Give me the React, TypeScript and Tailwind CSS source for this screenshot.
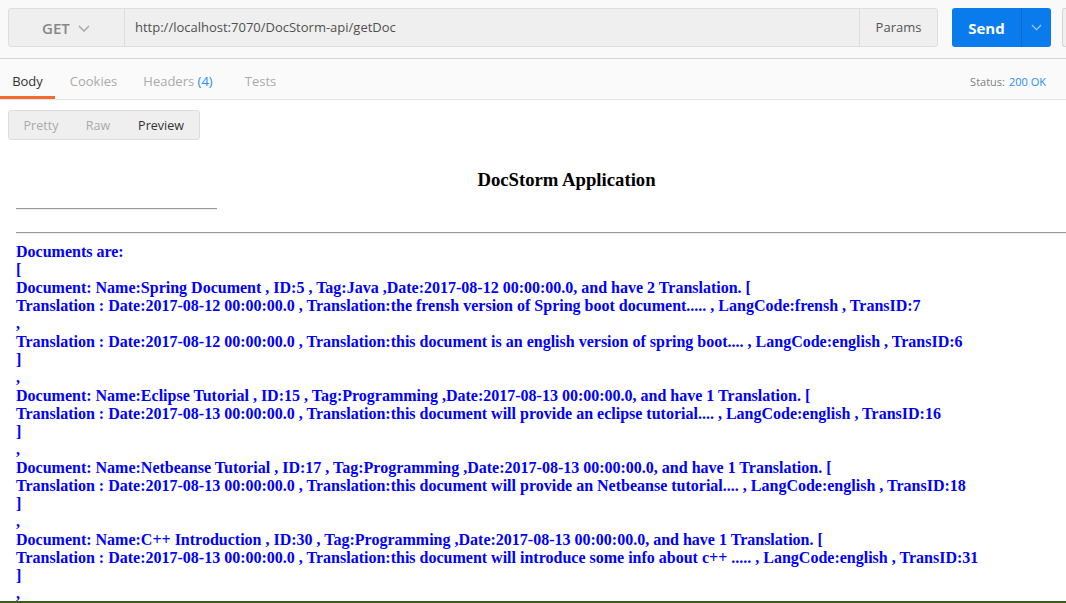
import React from "react";

const lines: string[] = [
  "Documents are:",
  "[",
  "Document: Name:Spring Document , ID:5 , Tag:Java ,Date:2017-08-12 00:00:00.0, and have 2 Translation. [",
  "Translation : Date:2017-08-12 00:00:00.0 , Translation:the frensh version of Spring boot document..... , LangCode:frensh , TransID:7",
  ",",
  "Translation : Date:2017-08-12 00:00:00.0 , Translation:this document is an english version of spring boot.... , LangCode:english , TransID:6",
  "]",
  ",",
  "Document: Name:Eclipse Tutorial , ID:15 , Tag:Programming ,Date:2017-08-13 00:00:00.0, and have 1 Translation. [",
  "Translation : Date:2017-08-13 00:00:00.0 , Translation:this document will provide an eclipse tutorial.... , LangCode:english , TransID:16",
  "]",
  ",",
  "Document: Name:Netbeanse Tutorial , ID:17 , Tag:Programming ,Date:2017-08-13 00:00:00.0, and have 1 Translation. [",
  "Translation : Date:2017-08-13 00:00:00.0 , Translation:this document will provide an Netbeanse tutorial.... , LangCode:english , TransID:18",
  "]",
  ",",
  "Document: Name:C++ Introduction , ID:30 , Tag:Programming ,Date:2017-08-13 00:00:00.0, and have 1 Translation. [",
  "Translation : Date:2017-08-13 00:00:00.0 , Translation:this document will introduce some info about c++ ..... , LangCode:english , TransID:31",
  "]",
  ",",
];

function Chevron({ color, size = 12 }: { color: string; size?: number }) {
  return (
    <svg width={size} height={size * 0.6} viewBox="0 0 12 7" fill="none">
      <path d="M1 1l5 5 5-5" stroke={color} strokeWidth="1.4" />
    </svg>
  );
}

export default function App() {
  const ui = { fontFamily: '"Open Sans", "Noto Sans", sans-serif' };
  const serif = { fontFamily: '"Liberation Serif", "Times New Roman", serif' };
  return (
    <div className="h-[603px] w-[1066px] overflow-hidden flex flex-col bg-white" style={ui}>
      <div className="flex-1 overflow-hidden flex flex-col">
        {/* top bar */}
        <div className="h-[59px] shrink-0 bg-[#f9f9f9] border-b border-[#d4d4d4] flex items-start pt-2 pl-2">
          <div className="shrink-0 flex h-[39px] w-[930px] rounded-[3px] border border-[#dedede] bg-[#efefef]">
            <div className="w-[116px] shrink-0 flex items-center pl-[33px] pt-[2px] gap-[8px] border-r border-[#dcdcdc]">
              <span className="text-[15px] font-semibold text-[#888888]">GET</span>
              <Chevron color="#a8a8a8" />
            </div>
            <div className="flex-1 flex items-center pl-[10px] pt-[1px] text-[13px] text-[#505050]">
              http://localhost:7070/DocStorm-api/getDoc
            </div>
            <div className="w-[78px] shrink-0 flex items-center justify-center pt-[1px] border-l border-[#dcdcdc] text-[13px] text-[#555555]">
              Params
            </div>
          </div>
          <div className="shrink-0 ml-[14px] flex h-[39px] w-[99px] rounded-[3px] bg-[#097bed] overflow-hidden">
            <div className="w-[69px] flex items-center justify-center pt-[2px] text-[15px] font-bold text-white">Send</div>
            <div className="flex-1 flex items-center justify-center border-l border-[#0a6bd0]">
              <Chevron color="#9cc7f4" size={11} />
            </div>
          </div>
          <div className="shrink-0 ml-[11px] h-[39px] w-[20px] rounded-l-[3px] border border-r-0 border-[#d6d6d6] bg-[#f0f0f0]" />
        </div>

        {/* tabs row */}
        <div className="h-[41px] shrink-0 bg-[#fafafa] border-b border-[#e4e4e4] flex items-stretch text-[13px]">
          <div className="w-[55px] flex items-center justify-center text-[#333333] border-b-[3px] border-[#f26b2c] pt-[9px]">
            Body
          </div>
          <div className="w-[77px] flex items-center justify-center text-[#aaaaaa] pt-[6px]">Cookies</div>
          <div className="w-[92px] flex items-center justify-center text-[#aaaaaa] pt-[6px]">
            Headers&nbsp;<span className="text-[#2a8ef0]">(4)</span>
          </div>
          <div className="w-[73px] flex items-center justify-center text-[#aaaaaa] pt-[6px]">Tests</div>
          <div className="flex-1 flex items-center justify-end pr-[20px] pt-[6px] text-[11px]">
            <span className="text-[#808080]">Status:</span>
            <span className="ml-[4px] text-[#2a8ef0]">200 OK</span>
          </div>
        </div>

        {/* body */}
        <div className="flex-1 flex flex-col bg-white overflow-hidden">
          <div className="pl-2 pt-[10px]">
            <div className="flex h-[30px] w-[192px] rounded-[3px] border border-[#dddddd] bg-[#efefef] text-[12.5px] pt-[3px]">
              <div className="w-[64px] flex items-center justify-center text-[#aaaaaa]">Pretty</div>
              <div className="w-[50px] flex items-center justify-center text-[#aaaaaa]">Raw</div>
              <div className="flex-1 flex items-center justify-center text-[#333333]">Preview</div>
            </div>
          </div>
          <div className="ml-2 w-[1117px] px-2 pt-[29px]" style={serif}>
            <div className="text-center text-[18.72px] leading-[22px] font-bold text-black">DocStorm Application</div>
            <div className="mt-[17px] w-[201px] border-t border-b border-t-[#9a9a9a] border-b-[#eeeeee]" />
            <div className="mt-[22px] w-full border-t border-b border-t-[#9a9a9a] border-b-[#eeeeee]" />
            <div className="mt-[9px] text-[16px] leading-[18px] font-bold text-[#0000ff] whitespace-pre">
              {lines.map((l, i) => (
                <div key={i}>{l}</div>
              ))}
            </div>
          </div>
        </div>
      </div>
      <div className="h-[2px] shrink-0 bg-[#3b5b1f]" />
    </div>
  );
}
